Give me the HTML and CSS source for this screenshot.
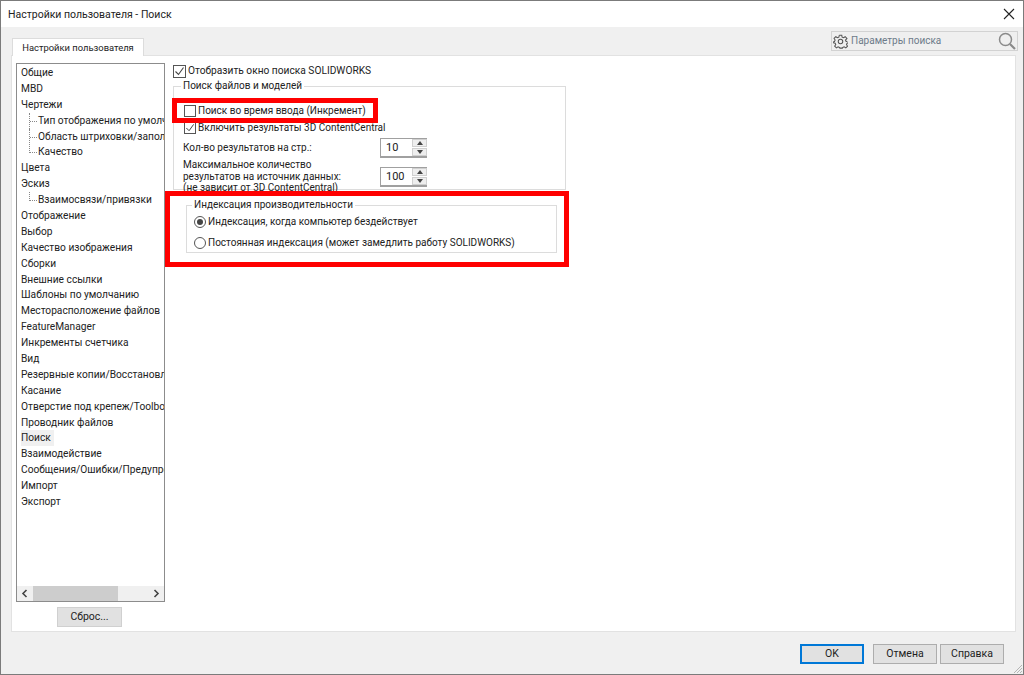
FILE: index.html
```html
<!DOCTYPE html>
<html lang="ru">
<head>
<meta charset="utf-8">
<title>Настройки пользователя - Поиск</title>
<link rel="stylesheet" href="styles.css">
</head>
<body>
<div class="window">
  <header class="titlebar">
    <span class="title">Настройки пользователя - Поиск</span>
    <svg class="close" width="12" height="12" viewBox="0 0 12 12"><path d="M1 1l10 10M11 1L1 11" stroke="#222" stroke-width="1.1" fill="none"/></svg>
  </header>
  <div class="tabbar">
    <div class="tab">Настройки пользователя</div>
    <div class="search">
      <svg class="gear" width="15" height="15" viewBox="0 0 24 24" fill="none" stroke="#555" stroke-width="1.7"><circle cx="12" cy="12" r="3.6"/><path d="M10 2h4l.6 3 2.3 1 2.6-1.7 2.800 2.800L20 9.700l1 2.300h2v0M10 2l-.6 3-2.300 1L4.500 4.300 1.700 7.100 3.400 9.700l-1 2.300H1"/><path d="M1 12v2l2.400.6 1 2.300-1.700 2.600 2.800 2.800 2.600-1.700 2.300 1 .6 1h4l.6-1 2.300-1 2.600 1.700 2.800-2.800-1.700-2.600 1-2.300 2.400-.6v-2"/></svg>
      <span class="search-text">Параметры поиска</span>
      <svg class="glass" width="18" height="18" viewBox="0 0 18 18" fill="none" stroke="#8a8a8a"><circle cx="7.500" cy="7.500" r="6" stroke-width="1.500"/><path d="M12 12l5 5" stroke-width="2.200"/></svg>
    </div>
  </div>
  <main class="panel">
    <aside class="side">
      <div class="tree">
        <ul class="tree-list">
          <li class="node">Общие</li>
          <li class="node">MBD</li>
          <li class="node">Чертежи</li>
          <li class="node sub"><span class="conn"></span>Тип отображения по умолчанию</li>
          <li class="node sub"><span class="conn"></span>Область штриховки/заполнения</li>
          <li class="node sub"><span class="conn conn-last"></span>Качество</li>
          <li class="node">Цвета</li>
          <li class="node">Эскиз</li>
          <li class="node sub"><span class="conn conn-last"></span>Взаимосвязи/привязки</li>
          <li class="node">Отображение</li>
          <li class="node">Выбор</li>
          <li class="node">Качество изображения</li>
          <li class="node">Сборки</li>
          <li class="node">Внешние ссылки</li>
          <li class="node">Шаблоны по умолчанию</li>
          <li class="node">Месторасположение файлов</li>
          <li class="node">FeatureManager</li>
          <li class="node">Инкременты счетчика</li>
          <li class="node">Вид</li>
          <li class="node">Резервные копии/Восстановление</li>
          <li class="node">Касание</li>
          <li class="node">Отверстие под крепеж/Toolbox</li>
          <li class="node">Проводник файлов</li>
          <li class="node"><span class="selected">Поиск</span></li>
          <li class="node">Взаимодействие</li>
          <li class="node">Сообщения/Ошибки/Предупреждения</li>
          <li class="node">Импорт</li>
          <li class="node">Экспорт</li>
        </ul>
        <div class="hscroll">
          <svg class="arrow" width="16" height="15" viewBox="0 0 16 15"><path d="M9.500 4L6 7.500 9.500 11" stroke="#444" stroke-width="1.600" fill="none"/></svg>
          <div class="track"><div class="thumb"></div></div>
          <svg class="arrow" width="16" height="15" viewBox="0 0 16 15"><path d="M6.500 4L10 7.500 6.500 11" stroke="#444" stroke-width="1.600" fill="none"/></svg>
        </div>
      </div>
      <button class="btn reset">Сброс...</button>
    </aside>
    <section class="settings">
      <label class="check-row top-check"><span class="box checked"><svg width="11" height="11" viewBox="0 0 11 11"><path d="M1.500 5.500l3 3 5-7" stroke="#444" stroke-width="1.100" fill="none"/></svg></span>Отобразить окно поиска SOLIDWORKS</label>
      <fieldset class="group files">
        <legend>Поиск файлов и моделей</legend>
        <label class="check-row inc"><span class="box small"></span>Поиск во время ввода (Инкремент)</label>
        <label class="check-row cc"><span class="box small checked"><svg width="10" height="10" viewBox="0 0 11 11"><path d="M1.500 5.500l3 3 5-7" stroke="#444" stroke-width="1.100" fill="none"/></svg></span>Включить результаты 3D ContentCentral</label>
        <div class="field-row first">
          <span class="field-label">Кол-во результатов на стр.:</span>
          <div class="spin"><span class="spin-value">10</span><span class="spin-btns"><span class="up"></span><span class="down"></span></span></div>
        </div>
        <div class="field-row second">
          <span class="field-label multi">Максимальное количество<br>результатов на источник данных:<br>(не зависит от 3D ContentCentral)</span>
          <div class="spin"><span class="spin-value">100</span><span class="spin-btns"><span class="up"></span><span class="down"></span></span></div>
        </div>
      </fieldset>
      <fieldset class="group perf">
        <legend>Индексация производительности</legend>
        <label class="radio-row r1"><span class="radio on"></span>Индексация, когда компьютер бездействует</label>
        <label class="radio-row r2"><span class="radio"></span>Постоянная индексация (может замедлить работу SOLIDWORKS)</label>
      </fieldset>
    </section>
  </main>
  <footer class="footer">
    <button class="btn ok">OK</button>
    <button class="btn cancel">Отмена</button>
    <button class="btn help">Справка</button>
  </footer>
  <svg class="grip" width="12" height="12" viewBox="0 0 12 12"><path d="M11 3L3 11M11 6L6 11M11 9L9 11" stroke="#b5b5b5" fill="none"/></svg>
  <div class="mark mark-a"></div>
  <div class="mark mark-b"></div>
</div>
</body>
</html>
```
FILE: styles.css
```css
* { box-sizing: border-box; }
html, body { margin: 0; padding: 0; }
body { font: 10px/14px Roboto, "Noto Sans", sans-serif; color: #222; background: #f0f0f0; }
.window { position: relative; width: 1024px; height: 675px; border: 1px solid #7b7b7b; background: #f0f0f0; display: flex; flex-direction: column; overflow: hidden; }
.titlebar { height: 26px; flex: none; background: #fff; display: flex; align-items: center; justify-content: space-between; padding: 1px 8px 0 7px; }
.title { font-size: 10.500px; }
.close { margin-top: -1px; }
.tabbar { height: 28px; flex: none; display: flex; justify-content: space-between; align-items: flex-start; padding: 4px 5px 0 11px; }
.tab { margin-top: 7px; width: 132px; height: 18px; background: #fff; border: 1px solid #dcdcdc; border-bottom: 0; text-align: center; line-height: 17px; font-size: 9.400px; position: relative; z-index: 1; }
.search { width: 187px; height: 20px; background: #efefef; border: 1px solid #d2d2d2; display: flex; align-items: center; padding: 0 1px; color: #6d7b8a; }
.gear { flex: none; }
.search-text { margin-left: 3px; flex: 1; }
.glass { flex: none; }
.panel { width: 1005px; height: 577px; flex: none; margin-left: 10px; background: #fff; border: 1px solid #e2e2e2; display: flex; }
.side { width: 156px; flex: none; display: flex; flex-direction: column; padding: 7px 0 0 4px; }
.tree { width: 149px; height: 539px; border: 1px solid #8c8c8c; background: #fff; display: flex; flex-direction: column; }
.tree-list { list-style: none; margin: 0; padding: 1px 0 0 4px; flex: 1; overflow: hidden; font-size: 10.200px; }
.node { height: 15.900px; line-height: 16px; white-space: nowrap; overflow: hidden; display: flex; color: #222; }
.sub { padding-left: 8px; }
.conn { width: 9px; flex: none; border-left: 1px dotted #888; position: relative; height: 16px; }
.conn::after { content: ""; position: absolute; left: 0; top: 8px; width: 7px; border-top: 1px dotted #888; }
.conn-last { height: 9px; }
.selected { background: #f0f0f0; padding: 0 1px; margin-left: -1px; width: 34px; }
.hscroll { height: 15px; flex: none; display: flex; background: #f0f0f0; }
.arrow { flex: none; }
.track { flex: 1; }
.thumb { width: 85px; height: 100%; background: #cdcdcd; }
.btn { font: inherit; font-size: 10.500px; color: #222; background: #e1e1e1; border: 1px solid #adadad; padding: 0; height: 20px; }
.reset { width: 65px; margin: 5px 0 0 41px; border-color: #d0d0d0; }
.settings { flex: 1; padding: 8px 0 0 5px; display: flex; flex-direction: column; }
.check-row { display: flex; align-items: center; white-space: nowrap; }
.box { width: 13px; height: 13px; border: 1px solid #555; background: #fff; display: flex; align-items: center; justify-content: center; flex: none; margin-right: 2px; }
.small { width: 12px; height: 12px; }
.top-check { height: 14px; font-size: 10.200px; }
.group { margin: 0; padding: 0; border: 1px solid #dcdcdc; min-width: 0; }
.group legend { padding: 0 2px; margin-left: -2px; line-height: 12px; }
.files { width: 393px; height: 110px; margin-top: 2px; padding: 0 0 0 9px; overflow: visible; }
.inc { margin-top: 12px; height: 14px; padding-left: 1px; }
.cc { margin-top: 3px; height: 14px; padding-left: 1px; }
.field-row { display: flex; justify-content: space-between; width: 244px; }
.first { margin-top: 3px; height: 20px; align-items: center; }
.second { margin-top: 2px; }
.field-label { display: block; }
.multi { line-height: 11.700px; margin-top: -1px; }
.second .spin { margin-top: 7px; }
.spin { width: 47px; height: 20px; background: #fff; border: 1px solid #a0a0a0; border-width: 1px 0 2px 1px; display: flex; flex: none; }
.spin-value { flex: 1; padding-left: 5px; font-size: 11px; line-height: 18px; }
.spin-btns { width: 15px; display: flex; flex-direction: column; gap: 1px; background: #fff; }
.spin-btns span { flex: 1; background: #eee; border: 1px solid #d0d0d0; display: flex; align-items: center; justify-content: center; }
.up::before { content: ""; border: 3px solid transparent; border-top: 0; border-bottom: 4px solid #444; }
.down::before { content: ""; border: 3px solid transparent; border-bottom: 0; border-top: 4px solid #444; }
.perf { width: 371px; height: 54px; margin: 9px 0 0 13px; padding: 0 0 0 7px; }
.radio-row { display: flex; align-items: center; height: 14px; white-space: nowrap; }
.radio { width: 12px; height: 12px; border: 1px solid #555; border-radius: 50%; background: #fff; margin-right: 2px; flex: none; display: flex; align-items: center; justify-content: center; }
.on::before { content: ""; width: 6px; height: 6px; border-radius: 50%; background: #444; }
.r1 { margin-top: 4px; }
.r2 { margin-top: 7px; }
.footer { flex: 1; display: flex; padding: 12px 0 0 799px; align-items: flex-start; }
.footer .btn { width: 64px; }
.ok { border: 2px solid #0078d7; }
.cancel { margin-left: 9px; }
.help { margin-left: 3px; }
.grip { position: absolute; right: 0; bottom: 0; }
.mark { position: absolute; border: 5px solid #f00; z-index: 5; }
.mark-a { left: 171px; top: 97px; width: 206px; height: 25px; }
.mark-b { left: 164px; top: 190px; width: 404px; height: 76px; }
```
